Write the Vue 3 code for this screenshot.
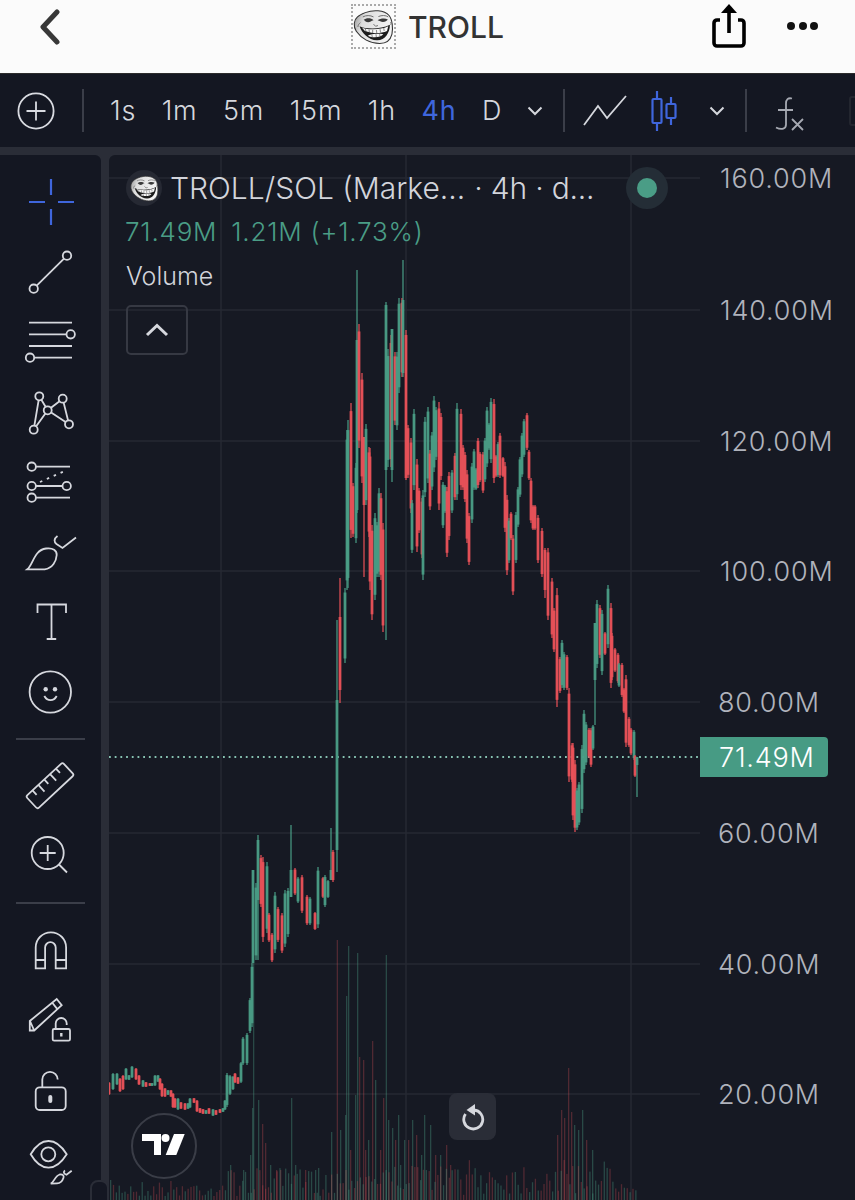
<template>
  <div class="screen">
    <!-- shared troll face -->
    <svg class="defs" width="0" height="0">
      <defs>
        <linearGradient id="faceShade" x1="0" y1="0" x2="1" y2="0.3">
          <stop offset="0" stop-color="#8c8c8c" />
          <stop offset="0.3" stop-color="#dedede" />
          <stop offset="1" stop-color="#f4f4f4" />
        </linearGradient>
        <symbol id="troll" viewBox="0 0 100 100" preserveAspectRatio="none">
          <path d="M30 10C48 2 76 2 88 18c8 11 10 36 7 52-3 14-12 26-30 26C42 96 20 82 8 62 0 48 2 30 11 22c5-6 12-9 19-12z" fill="url(#faceShade)" stroke="#333" stroke-width="2.600" />
          <path d="M26 30c6-6 18-6 24 1-6 1-8 6-13 6-5 0-8-4-11-7zM60 31c6-5 18-7 25-2-3 4-6 7-12 7-5 0-8-4-13-5z" fill="#3a3a3a" />
          <path d="M24 22c8-5 18-5 26 0M62 21c8-4 18-4 24 1" stroke="#666" stroke-width="2.400" fill="none" />
          <path d="M16 48C30 56 66 58 90 44 90 66 78 88 58 87 38 86 22 68 16 48z" fill="#1c1c1c" />
          <path d="M22 52c16 6 44 7 64-4l-3 13c-16 8-38 7-54 0zM36 74c10-6 28-6 38-4-6 9-26 11-38 4z" fill="#f7f7f7" />
          <path d="M30 55l2 9M39 57l1 9M48 58v10M57 58l1 9M66 56l1 9M75 53l1 8M46 72l1 6M56 70l1 9M65 70l1 7" stroke="#333" stroke-width="1.500" />
          <path d="M18 38c-4 3-6 8-6 12M92 36c1 3 1 5 0 8M50 42l5 6 6-2" stroke="#555" stroke-width="2" fill="none" />
        </symbol>
      </defs>
    </svg>

    <!-- top nav -->
    <header class="nav">
      <svg class="back" width="24" height="36" viewBox="0 0 24 36">
        <path d="M19 3L5 18l14 15" fill="none" stroke="#383838" stroke-width="5" stroke-linecap="round" stroke-linejoin="round" />
      </svg>
      <div class="nav-title">
        <span class="token-box">
          <svg width="41" height="36"><use href="#troll" /></svg>
        </span>
        <span class="token-name">TROLL</span>
      </div>
      <svg class="share" width="36" height="46" viewBox="0 0 36 46">
        <path d="M8 16H5a3 3 0 0 0-3 3v20a3 3 0 0 0 3 3h24a3 3 0 0 0 3-3V19a3 3 0 0 0-3-3h-3" fill="none" stroke="#000" stroke-width="3.600" />
        <path d="M17 29V6" stroke="#000" stroke-width="3.600" />
        <path d="M17 0l8 9H9z" fill="#000" />
      </svg>
      <div class="more"><i></i><i></i><i></i></div>
    </header>

    <!-- interval bar -->
    <div class="toolbar">
      <svg class="add" width="38" height="38" viewBox="0 0 38 38">
        <circle cx="19" cy="19" r="17.600" />
        <path d="M19 9.500v19M9.500 19h19" />
      </svg>
      <span class="divider first"></span>
      <div class="intervals">
        <span v-for="item in intervals" :key="item" :class="['interval', { active: item === '4h' }]">{{ item }}</span>
      </div>
      <svg class="chev one" width="16" height="10" viewBox="0 0 16 10">
        <path d="M1.500 1.500L8 8l6.500-6.500" />
      </svg>
      <span class="divider second"></span>
      <svg class="line-icon" width="44" height="32" viewBox="0 0 44 32">
        <path d="M1 30L15 11l9 12L43 1" />
      </svg>
      <svg class="candle-icon" width="26" height="40" viewBox="0 0 26 40">
        <path d="M6 0v8M6 32v8M20 6v7M20 27v7" />
        <rect x="1.500" y="8" width="9" height="24" rx="1" />
        <rect x="15.500" y="13" width="9" height="14" rx="1" />
      </svg>
      <svg class="chev two" width="16" height="10" viewBox="0 0 16 10">
        <path d="M1.500 1.500L8 8l6.500-6.500" />
      </svg>
      <span class="divider third"></span>
      <svg class="fx" width="30" height="34" viewBox="0 0 30 34">
        <path d="M17 1.500c-4-1-6 1-6 5v21c0 4-4 6-10 3M3 13h15" />
        <path d="M17 22l11 11M28 22L17 33" />
      </svg>
      <span class="ghost"></span>
    </div>

    <div class="body">
      <!-- drawing tools -->
      <aside class="tools">
        <svg class="tool" viewBox="0 0 101 70">
          <path class="blue" d="M51 12v16M51 42v16M29 35h16M58 35h16" />
        </svg>
        <svg class="tool" viewBox="0 0 101 70">
          <circle cx="33.700" cy="51.700" r="4.200" /><circle cx="67" cy="18.700" r="4.200" />
          <path d="M36.700 48.700l27.300-27" />
        </svg>
        <svg class="tool" viewBox="0 0 101 70">
          <path d="M29 15.700h43M29 27.300h37.500M29 39h43M34.300 50.700H72" />
          <circle cx="70.700" cy="27.300" r="4.200" /><circle cx="30" cy="50.700" r="4.200" />
        </svg>
        <svg class="tool" viewBox="0 0 101 70">
          <path d="M33.700 52.700L39.300 19.300l8.400 14 15-11.600L69 47.300 47.700 33.300z" />
          <circle class="fill" cx="39.300" cy="19.300" r="4" /><circle class="fill" cx="62.700" cy="21.700" r="4" />
          <circle class="fill" cx="47.700" cy="33.300" r="4" /><circle class="fill" cx="33.700" cy="52.700" r="4" />
          <circle class="fill" cx="69" cy="47.300" r="4" />
        </svg>
        <svg class="tool" viewBox="0 0 101 70">
          <path d="M36 19.700h34M36 39h26.500M36 50.700h34" />
          <path d="M40 35l27-12" stroke-dasharray="2.500 5" />
          <circle cx="31.700" cy="19.700" r="4.200" /><circle cx="31.700" cy="39" r="4.200" />
          <circle cx="66.700" cy="39" r="4.200" /><circle cx="31.700" cy="50.700" r="4.200" />
        </svg>
        <svg class="tool" viewBox="0 0 101 70">
          <path d="M27.300 52.300C33 48 34 33 46 31.500c7-1 11 2 10.700 6.500-.4 6-4 13-12 14.300z" />
          <path d="M57.500 19c-4 3-3.500 6-1 8l6 4L76 20.500" />
        </svg>
        <svg class="tool" viewBox="0 0 101 70">
          <path d="M37.500 26v-8.500h28.500V26M51.500 17.500v34.500M46.700 52h9.500" />
        </svg>
        <svg class="tool" viewBox="0 0 101 70">
          <circle cx="50.300" cy="35" r="20.700" />
          <circle class="dot" cx="45.700" cy="32.300" r="2.200" /><circle class="dot" cx="55" cy="32.300" r="2.200" />
          <path d="M44.300 39c3 5.500 9.500 5.500 12.400 0" />
        </svg>
        <span class="tool-line first"></span>
        <svg class="tool" viewBox="0 0 101 70">
          <g transform="translate(50 35.700) rotate(-43)">
            <rect x="-25" y="-8.500" width="50" height="17" rx="2" />
            <path d="M-16-8.500v6M-8-8.500v9M0-8.500v6M8-8.500v9M16-8.500v6" />
          </g>
        </svg>
        <svg class="tool" viewBox="0 0 101 70">
          <circle cx="47.700" cy="33" r="16" />
          <path d="M47.700 25v16M39.700 33h16M59 44.500L67 52.500" />
        </svg>
        <span class="tool-line second"></span>
        <svg class="tool" viewBox="0 0 101 70">
          <path d="M35.700 52.300V31.500a15.200 15.200 0 0 1 30.400 0v20.800H55.700V31.500a5.300 5.300 0 0 0-10.600 0v20.800zM35.700 44h9.400M55.700 44h10.400" />
        </svg>
        <svg class="tool" viewBox="0 0 101 70">
          <path d="M29.800 44.500v-9.500L56.700 13l5 6.200-27.500 25.300zM30 35l4.200 9.500M52.500 17l5 6.400" />
          <rect x="52.700" y="43" width="17.300" height="11.700" rx="1.500" />
          <path d="M55.700 43v-5.500a5.500 5.500 0 0 1 11 0v1.500" />
          <path class="key" d="M61.300 47v3.500" />
        </svg>
        <svg class="tool" viewBox="0 0 101 70">
          <rect x="35.700" y="31.300" width="30" height="22.700" rx="4" />
          <path d="M42.300 31v-7.500a7.700 7.700 0 0 1 15.400 0" />
          <rect class="dot" x="48.300" y="39" width="4" height="8" rx="2" />
        </svg>
        <svg class="tool" viewBox="0 0 101 70">
          <path d="M30.700 28.300C36 19 42 15 48.500 15s12.500 4 18.200 13.300C61 37.500 55 41.700 48.500 41.700S36 37.500 30.700 28.300z" />
          <circle cx="48.300" cy="28.300" r="7" />
          <path d="M50.700 57.700c3-1 4.500-8 9-9.200 3-.5 4.500 1 3.800 3.200-1 3-3.500 5.500-6.500 5.700zM65 44.500c-1.500 1-1.500 2.500 0 3.500l1.500.7 5.200-4" />
        </svg>
      </aside>

      <!-- chart -->
      <main class="chart">
        <svg class="plot" viewBox="109 155 746 1045">
          <path v-for="y in gridY" :key="'h' + y" class="grid" :d="`M109 ${y}H700`" />
          <path v-for="x in gridX" :key="'v' + x" class="grid" :d="`M${x} 155V1200`" />

          <rect
            v-for="(bar, i) in volumes"
            :key="'vol' + i"
            :x="bar.x"
            :y="bar.top"
            width="1.300"
            :height="1200 - bar.top"
            :class="bar.up ? 'vol-up' : 'vol-down'"
          />

          <path class="last-line" d="M109 757H700" />

          <g v-for="(c, i) in candles" :key="'c' + i" :class="c.up ? 'up' : 'down'">
            <rect :x="c.x - 0.6" :y="c.top" width="1.200" :height="c.bottom - c.top" />
            <rect class="candle-body" :x="c.x - 1.400" :y="c.bodyTop" width="2.800" :height="c.bodyBottom - c.bodyTop" />
          </g>

          <text v-for="tick in ticks" :key="tick.label" class="tick" :x="tick.x" :y="tick.y + 9.500">{{ tick.label }}</text>
        </svg>

        <div class="legend">
          <div class="legend-title">
            <span class="legend-logo">
              <svg width="29" height="27"><use href="#troll" /></svg>
            </span>
            <span>TROLL/SOL (Marke...</span>
            <span class="legend-meta">· 4h · d...</span>
          </div>
          <div class="legend-values"><span>71.49M</span><span>1.21M (+1.73%)</span></div>
          <div class="legend-volume">Volume</div>
          <div class="legend-toggle">
            <svg width="24" height="14" viewBox="0 0 24 14">
              <path d="M2 12L12 2.500 22 12" />
            </svg>
          </div>
        </div>

        <span class="status"><i></i></span>
        <div class="last-price">71.49M</div>

        <div class="tv-logo">
          <svg width="44" height="24" viewBox="0 0 44 24">
            <path d="M0 0h19v21h-7V7H0z" />
            <circle cx="23.500" cy="4" r="4" />
            <path d="M32 0h10.700l-8.400 21H23.700z" />
          </svg>
        </div>

        <div class="reset">
          <svg width="26" height="28" viewBox="0 0 26 28">
            <path class="arc" d="M5.500 11a9.500 9.500 0 1 0 8.500-4" />
            <path class="head" d="M15 1v11.500L6.500 7z" />
          </svg>
        </div>
      </main>
      <span class="handle"></span>
    </div>
  </div>
</template>

<script setup>
const intervals = ['1s', '1m', '5m', '15m', '1h', '4h', 'D']

const gridY = [178, 310, 441, 571, 702, 833, 964, 1094]
const gridX = [221, 406, 631]

const ticks = [
  { label: '160.00M', x: 720, y: 178 },
  { label: '140.00M', x: 720, y: 310 },
  { label: '120.00M', x: 720, y: 441 },
  { label: '100.00M', x: 720, y: 571 },
  { label: '80.00M', x: 718, y: 702 },
  { label: '60.00M', x: 718, y: 833 },
  { label: '40.00M', x: 718, y: 964 },
  { label: '20.00M', x: 718, y: 1094 }
]

// x, high, low, g/r, optional body top and bottom (all read off the chart in px)
const rawCandles = [
  [109, 1082, 1095, 'r'], [113, 1073, 1090, 'g'], [117, 1073, 1085, 'g'], [120, 1078, 1092, 'r'],
  [123, 1075, 1090, 'r'], [126, 1068, 1080, 'g'], [129, 1075, 1080, 'g'], [132, 1066, 1078, 'g'],
  [136, 1068, 1080, 'r'], [139, 1075, 1085, 'r'], [143, 1080, 1087, 'g'], [146, 1082, 1087, 'r'],
  [150, 1083, 1086, 'r'], [152, 1083, 1086, 'g'], [155, 1075, 1086, 'g'], [158, 1075, 1082, 'g'],
  [160, 1078, 1090, 'r'], [162, 1083, 1097, 'r'], [165, 1088, 1097, 'r'], [168, 1090, 1095, 'g'],
  [171, 1090, 1097, 'r'], [173, 1093, 1108, 'r'], [175, 1098, 1108, 'r'], [178, 1098, 1110, 'g'],
  [181, 1102, 1109, 'r'], [185, 1103, 1110, 'r'], [188, 1103, 1109, 'g'], [190, 1098, 1108, 'g'],
  [194, 1098, 1103, 'r'], [197, 1100, 1112, 'r'], [200, 1108, 1113, 'r'], [203, 1109, 1114, 'r'],
  [206, 1110, 1114, 'g'], [209, 1108, 1114, 'r'], [213, 1109, 1116, 'g'], [216, 1110, 1115, 'r'],
  [220, 1109, 1113, 'r'], [223, 1108, 1112, 'g'], [225, 1100, 1110, 'g'],
  [227, 1073, 1107, 'g'], [230, 1075, 1095, 'g'], [233, 1076, 1090, 'g'], [235, 1073, 1083, 'r'],
  [238, 1077, 1084, 'r'], [241, 1062, 1083, 'g'], [243, 1037, 1065, 'g'], [247, 1033, 1065, 'g'],
  [250, 998, 1033, 'g'], [252, 963, 1027, 'g'], [253, 870, 963, 'g', 870, 963], [256, 883, 960, 'g'],
  [258, 835, 960, 'g', 840, 900], [261, 855, 907, 'r'], [263, 857, 942, 'r'], [267, 862, 933, 'g'],
  [269, 913, 942, 'r'], [272, 933, 962, 'r'], [275, 892, 953, 'g'], [278, 907, 942, 'r'],
  [282, 913, 953, 'r'], [285, 890, 947, 'g'], [288, 888, 937, 'g'], [291, 825, 897, 'g', 870, 897],
  [295, 868, 895, 'r'], [298, 877, 903, 'g'], [302, 875, 913, 'r'], [307, 895, 925, 'r'],
  [310, 897, 925, 'g'], [315, 912, 930, 'r'], [318, 867, 928, 'g'], [323, 877, 898, 'r'],
  [325, 875, 907, 'g'], [328, 880, 898, 'g'], [331, 828, 880, 'g', 870, 880], [333, 850, 882, 'r'],
  [337, 620, 872, 'g', 700, 850], [340, 578, 703, 'r', 617, 690], [345, 588, 663, 'g'],
  [347, 430, 590, 'g'], [348, 420, 588, 'g'], [351, 403, 538, 'r'], [353, 483, 537, 'r'],
  [356, 463, 543, 'g'], [357, 270, 513, 'g', 340, 510], [359, 324, 448, 'r'], [362, 373, 483, 'r'],
  [364, 437, 577, 'r', 437, 505], [366, 424, 505, 'g'], [369, 447, 537, 'r'], [370, 448, 590, 'r'],
  [372, 525, 620, 'r'], [375, 513, 600, 'g'], [377, 522, 577, 'g'], [379, 488, 577, 'g'],
  [381, 493, 580, 'r'], [383, 523, 632, 'r'], [386, 302, 640, 'g', 305, 470], [388, 349, 467, 'g'],
  [391, 335, 467, 'r'], [392, 329, 482, 'g', 329, 470], [395, 352, 425, 'r'], [397, 352, 430, 'g'],
  [399, 298, 393, 'g'], [402, 298, 377, 'r'], [403, 260, 377, 'g', 300, 373], [406, 330, 480, 'r', 335, 478],
  [408, 425, 478, 'r'], [411, 438, 513, 'r'], [412, 500, 553, 'g'], [414, 409, 490, 'g'],
  [417, 459, 552, 'r'], [419, 488, 533, 'r'], [422, 498, 558, 'r'], [423, 490, 580, 'g'],
  [425, 417, 497, 'g'], [428, 407, 483, 'g'], [430, 450, 510, 'r'], [432, 432, 490, 'g'],
  [434, 396, 472, 'g'], [436, 407, 460, 'g'], [439, 402, 510, 'r'], [441, 413, 480, 'r'],
  [443, 482, 528, 'g'], [445, 485, 513, 'g'], [447, 487, 557, 'r'], [449, 472, 540, 'r'],
  [452, 470, 513, 'g'], [455, 453, 500, 'r'], [457, 403, 500, 'g'], [461, 409, 490, 'r'],
  [463, 445, 490, 'r'], [465, 452, 502, 'r'], [467, 470, 543, 'r'], [469, 513, 565, 'r'],
  [472, 463, 523, 'g'], [474, 449, 490, 'g'], [476, 468, 490, 'g'], [478, 438, 488, 'r'],
  [480, 452, 482, 'r'], [483, 452, 493, 'r'], [485, 438, 482, 'g'], [487, 407, 467, 'g'],
  [489, 423, 450, 'g'], [491, 398, 463, 'g'], [494, 399, 483, 'r'], [496, 455, 477, 'r'],
  [498, 442, 477, 'g'], [500, 433, 478, 'r'], [503, 457, 477, 'r'], [505, 462, 532, 'r'],
  [507, 495, 575, 'r'], [509, 518, 563, 'g'], [511, 512, 540, 'r'], [513, 535, 595, 'r'],
  [516, 512, 563, 'g'], [518, 487, 527, 'g'], [520, 457, 497, 'g'], [522, 433, 477, 'g'],
  [524, 419, 457, 'g'], [527, 413, 450, 'r'], [529, 450, 480, 'r'], [531, 478, 523, 'r'],
  [533, 505, 530, 'r'], [535, 505, 530, 'r'], [538, 515, 563, 'r'], [542, 528, 577, 'r'],
  [545, 548, 598, 'r', 550, 590], [548, 548, 620, 'r'], [552, 578, 638, 'r'], [554, 608, 652, 'r'],
  [557, 588, 707, 'r'], [560, 657, 693, 'r'], [562, 640, 688, 'g'], [564, 652, 690, 'g'],
  [567, 655, 690, 'r'], [569, 688, 782, 'r'], [572, 743, 782, 'r'], [573, 743, 820, 'r'],
  [575, 760, 832, 'r'], [577, 788, 830, 'g'], [579, 782, 825, 'g'], [582, 745, 813, 'g'],
  [584, 710, 773, 'g'], [586, 722, 765, 'g'], [589, 728, 758, 'r'], [591, 728, 767, 'r'],
  [593, 725, 750, 'g'], [595, 623, 725, 'g', 623, 680], [597, 600, 668, 'g'], [600, 605, 658, 'r'],
  [602, 610, 675, 'g'], [605, 632, 655, 'r'], [608, 585, 648, 'g'], [611, 603, 688, 'r'],
  [612, 633, 680, 'r'], [615, 648, 672, 'r'], [618, 653, 683, 'r'], [619, 663, 687, 'g'],
  [622, 663, 697, 'r'], [624, 688, 713, 'r'], [626, 675, 747, 'r'], [629, 717, 747, 'r'],
  [631, 728, 755, 'r'], [634, 730, 760, 'g'], [635, 755, 777, 'r'], [637, 757, 797, 'g', 757, 765]
]

const candles = rawCandles.map(([x, top, bottom, dir, bt, bb]) => {
  const inset = (bottom - top) * 0.06
  return {
    x,
    top,
    bottom,
    up: dir === 'g',
    bodyTop: bt ?? top + inset,
    bodyBottom: bb ?? bottom - inset
  }
})

// tall volume bars read from the chart, the rest is filled in below
const bigBars = [
  [230, 1165, 1], [243, 1170, 1], [250, 1155, 1], [252, 1108, 1], [253, 963, 1], [258, 1100, 1],
  [262, 1124, 0], [265, 1143, 0], [270, 1165, 1], [276, 1170, 0], [280, 1170, 0], [291, 1098, 1],
  [295, 1165, 1], [305, 1170, 0], [315, 1170, 1], [318, 1168, 1], [331, 1132, 1], [336.700, 940, 0],
  [340, 1130, 1], [345, 1115, 1], [346, 996, 1], [348, 946, 1], [350, 1150, 0], [355, 1095, 1],
  [357, 953, 1], [359, 1057, 0], [363, 1060, 0], [365, 1150, 0], [368, 1140, 1], [372, 1041, 0],
  [375, 1080, 1], [380, 1150, 0], [383, 1098, 0], [385.700, 955, 1], [388, 1120, 1], [392, 1128, 1],
  [395, 1140, 0], [398, 1115, 1], [400, 1165, 1], [404, 1140, 1], [408, 1140, 0], [412, 1120, 1],
  [416, 1135, 0], [421, 1155, 1], [424, 1115, 1], [430, 1125, 1], [435, 1155, 0], [440, 1155, 1],
  [446, 1145, 0], [450, 1165, 0], [557, 1135, 0], [561, 1110, 0], [564, 1118, 0], [568, 1068, 0],
  [571, 1112, 0], [574, 1125, 1], [578, 1130, 1], [582, 1110, 1], [586, 1140, 0], [592, 1150, 1]
]

let seed = 7
const rand = () => {
  seed = (seed * 16807) % 2147483647
  return seed / 2147483647
}

const fillTop = (x) => {
  if (x < 222) return 1180 + rand() * 17
  if (x < 336) return 1168 + rand() * 28
  if (x < 455) return 1165 + rand() * 25
  return 1160 + rand() * 35
}

const volumes = [...bigBars.map(([x, top, up]) => ({ x, top, up: !!up }))]
for (let x = 110; x < 636; x += 2.870) {
  volumes.push({ x, top: fillTop(x), up: rand() > 0.5 })
}
</script>

<style>
html,
body {
  margin: 0;
  background: #161923;
}
</style>

<style scoped>
.screen {
  width: 855px;
  height: 1200px;
  overflow: hidden;
  display: flex;
  flex-direction: column;
  font-family: Inter, "Liberation Sans", sans-serif;
  background: #2a2d37;
}

.defs {
  position: absolute;
}

/* top nav */
.nav {
  height: 73px;
  flex: none;
  display: flex;
  align-items: flex-start;
  background: #fbfbfb;
  border-bottom: 1px solid #2c2c2c;
  box-sizing: content-box;
}

.back {
  margin: 9px 0 0 38px;
}

.nav-title {
  display: flex;
  align-items: center;
  width: 154px;
  flex: none;
  margin: 4px 0 0 289px;
  gap: 12px;
}

.token-box {
  width: 45px;
  height: 45px;
  box-sizing: border-box;
  border: 2px dotted #aaa;
  display: flex;
  align-items: center;
  justify-content: center;
}

.token-name {
  font-size: 30px;
  font-weight: 500;
  color: #333;
  line-height: 44px;
}

.share {
  margin: 4px 0 0 207px;
}

.more {
  display: flex;
  gap: 3.500px;
  margin: 22px 0 0 39px;
}

.more i {
  width: 8px;
  height: 8px;
  border-radius: 50%;
  background: #111;
}

/* interval bar */
.toolbar {
  height: 73px;
  flex: none;
  display: flex;
  align-items: center;
  padding-left: 17px;
  background: #141722;
  overflow: hidden;
}

.add {
  fill: none;
  stroke: #d9dbe1;
  stroke-width: 1.800;
  flex: none;
}

.divider {
  width: 2px;
  height: 43px;
  background: #3b3e49;
  flex: none;
}

.divider.first {
  margin-left: 27px;
}

.intervals {
  display: flex;
  gap: 25.500px;
  margin-left: 26px;
}

.interval {
  font-size: 27px;
  font-weight: 300;
  letter-spacing: 0.800px;
  color: #d5d7dd;
  line-height: 30px;
}

.interval.active {
  color: #3f66dd;
  font-weight: 400;
}

.chev {
  fill: none;
  stroke: #d5d7dd;
  stroke-width: 2;
  flex: none;
}

.chev.one {
  margin-left: 25px;
}

.divider.second {
  margin-left: 20px;
}

.line-icon {
  margin-left: 18px;
  fill: none;
  stroke: #d5d7dd;
  stroke-width: 1.800;
  flex: none;
}

.candle-icon {
  margin-left: 24px;
  fill: none;
  stroke: #3f66dd;
  stroke-width: 2.200;
  flex: none;
}

.chev.two {
  margin-left: 32px;
}

.divider.third {
  margin-left: 20px;
}

.fx {
  margin: 6px 0 0 28px;
  fill: none;
  stroke: #a6a9b2;
  stroke-width: 1.800;
  flex: none;
}

.ghost {
  width: 8px;
  height: 26px;
  margin-left: 44px;
  flex: none;
  border: 2px solid #23262f;
  border-radius: 3px;
}

/* lower part */
.body {
  position: relative;
  flex: 1;
  min-height: 0;
  margin-top: 8px;
  display: flex;
  gap: 8px;
}

.tools {
  width: 101px;
  flex: none;
  box-sizing: border-box;
  padding-top: 12px;
  background: #141722;
  border-top-right-radius: 6px;
  display: flex;
  flex-direction: column;
  align-items: center;
}

.tool {
  width: 101px;
  height: 70px;
  flex: none;
  fill: none;
  stroke: #d6d8de;
  stroke-width: 1.800;
}

.tool .blue {
  stroke: #3f66dd;
  stroke-width: 2.200;
}

.tool .fill {
  fill: #141722;
}

.tool .dot {
  stroke: none;
  fill: #d6d8de;
}

.tool .key {
  stroke-width: 2.400;
}

.tool-line {
  width: 69px;
  height: 2px;
  flex: none;
  background: #3b3e49;
  margin: 11px 0 10px;
}

.tool-line.second {
  margin-top: 12px;
  margin-bottom: 12px;
}

.chart {
  position: relative;
  flex: 1;
  min-width: 0;
  background: #161923;
  border-top-left-radius: 6px;
  overflow: hidden;
}

.plot {
  position: absolute;
  inset: 0;
  width: 746px;
  height: 1045px;
}

.grid {
  stroke: #262933;
  stroke-width: 1.500;
  fill: none;
}

.vol-up {
  fill: rgba(74, 157, 134, 0.36);
}

.vol-down {
  fill: rgba(232, 82, 90, 0.28);
}

.last-line {
  stroke: #86c2b1;
  stroke-width: 2;
  stroke-dasharray: 1.800 3.900;
  fill: none;
}

.up rect {
  fill: #4a9d86;
}

.down rect {
  fill: #ea5259;
}

.candle-body {
  opacity: 0.9;
}

.tick {
  font-size: 27px;
  font-weight: 300;
  letter-spacing: 0.800px;
  fill: #b0b3bc;
}

/* legend */
.legend {
  position: absolute;
  left: 17px;
  top: 15px;
  color: #d6d8de;
}

.legend-title {
  display: flex;
  align-items: center;
  height: 36px;
  font-size: 30px;
  font-weight: 300;
  white-space: nowrap;
  color: #d2d4db;
}

.legend-logo {
  width: 36px;
  height: 36px;
  margin-right: 8px;
  border-radius: 50%;
  background: #262933;
  display: flex;
  align-items: center;
  justify-content: center;
}

.legend-meta {
  margin-left: 9px;
  letter-spacing: -0.200px;
}

.legend-values {
  display: flex;
  gap: 14px;
  margin: 11px 0 0 -1px;
  font-size: 26px;
  font-weight: 300;
  letter-spacing: 0.800px;
  color: #4a9d86;
  line-height: 30px;
}

.legend-volume {
  margin-top: 14px;
  font-size: 25px;
  font-weight: 300;
  line-height: 30px;
  color: #d2d4db;
}

.legend-toggle {
  width: 62px;
  height: 50px;
  box-sizing: border-box;
  margin-top: 14px;
  border: 2px solid #363943;
  border-radius: 5px;
  display: flex;
  align-items: center;
  justify-content: center;
}

.legend-toggle path {
  fill: none;
  stroke: #d6d8de;
  stroke-width: 3;
}

.status {
  position: absolute;
  left: 517px;
  top: 12px;
  width: 42px;
  height: 42px;
  border-radius: 50%;
  background: #242d36;
  display: flex;
  align-items: center;
  justify-content: center;
}

.status i {
  width: 20px;
  height: 20px;
  border-radius: 50%;
  background: #4a9d86;
}

.last-price {
  position: absolute;
  left: 591px;
  top: 582px;
  width: 128px;
  height: 40px;
  box-sizing: border-box;
  padding-left: 19px;
  background: #479b84;
  border-radius: 0 4px 4px 0;
  color: #fff;
  font-size: 27px;
  font-weight: 300;
  letter-spacing: 0.800px;
  line-height: 41px;
}

.tv-logo {
  position: absolute;
  left: 22px;
  top: 958px;
  width: 66px;
  height: 66px;
  box-sizing: border-box;
  border: 2.500px solid #3a3d47;
  border-radius: 50%;
  display: flex;
  align-items: center;
  justify-content: center;
}

.tv-logo svg {
  fill: #fff;
}

.reset {
  position: absolute;
  left: 340px;
  top: 938px;
  width: 47px;
  height: 47px;
  border-radius: 8px;
  background: #2a2d37;
  display: flex;
  align-items: center;
  justify-content: center;
}

.reset .arc {
  fill: none;
  stroke: #d6d8de;
  stroke-width: 2.800;
}

.reset .head {
  fill: #d6d8de;
}

.handle {
  position: absolute;
  left: 90px;
  bottom: -6px;
  width: 15px;
  height: 22px;
  border: 2px solid #2a2d37;
  border-radius: 8px 8px 0 0;
  background: #141722;
}
</style>
